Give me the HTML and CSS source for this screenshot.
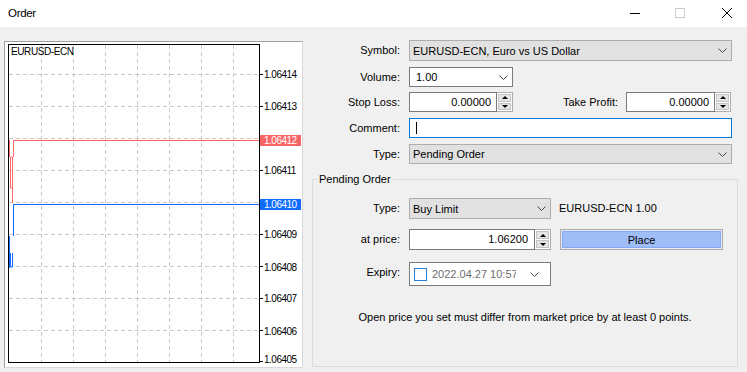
FILE: index.html
```html
<!DOCTYPE html>
<html lang="en">
<head>
  <meta charset="UTF-8">
  <title>Order</title>
  <link rel="stylesheet" href="styles.css">
</head>
<body>

  <div class="titlebar">
    <span class="title">Order</span>
    <div class="win-buttons">
      <span class="win-btn">
        <svg width="10" height="10" viewBox="0 0 10 10"><line x1="0" y1="5.5" x2="10" y2="5.5" stroke="#000" stroke-width="1"/></svg>
      </span>
      <span class="win-btn">
        <svg width="10" height="10" viewBox="0 0 10 10"><rect x="0.5" y="0.5" width="9" height="9" fill="none" stroke="#cccccc" stroke-width="1"/></svg>
      </span>
      <span class="win-btn close">
        <svg width="10" height="10" viewBox="0 0 10 10"><path d="M0 0 L10 10 M10 0 L0 10" stroke="#000" stroke-width="1"/></svg>
      </span>
    </div>
  </div>

  <div class="content">
    <!-- tick chart -->
    <div class="chart">
      <svg class="chart-svg" width="297" height="325" viewBox="5 42 297 325">
        <g stroke="#c8c8c8" stroke-width="1" stroke-dasharray="4 3" fill="none">
          <path d="M41.5 45 V362"/>
          <path d="M73.5 45 V362"/>
          <path d="M105.5 45 V362"/>
          <path d="M137.5 45 V362"/>
          <path d="M169.5 45 V362"/>
          <path d="M201.5 45 V362"/>
          <path d="M233.5 45 V362"/>
          <path d="M9 74.5 H259"/>
          <path d="M9 106.5 H259"/>
          <path d="M9 138.5 H259"/>
          <path d="M9 170.5 H259"/>
          <path d="M9 202.5 H259"/>
          <path d="M9 234.5 H259"/>
          <path d="M9 266.5 H259"/>
          <path d="M9 298.5 H259"/>
          <path d="M9 330.5 H259"/>
        </g>

        <rect x="8.5" y="44.5" width="251" height="318" fill="none" stroke="#000" stroke-width="1"/>

        <g stroke="#000" stroke-width="1">
          <path d="M260 74.5 H263"/>
          <path d="M260 106.5 H263"/>
          <path d="M260 170.5 H263"/>
          <path d="M260 234.5 H263"/>
          <path d="M260 266.5 H263"/>
          <path d="M260 298.5 H263"/>
          <path d="M260 330.5 H263"/>
          <path d="M260 361.5 H263"/>
        </g>

        <!-- ask line -->
        <path d="M13 140.5 H259" stroke="#ff5e5e" stroke-width="1" fill="none"/>
        <path d="M9.5 140 V157 M13.5 140 V157 M10.5 157 V188 H12.5 V157 Z M12.5 188 V203" stroke="#ff6b6b" stroke-width="1" fill="none"/>

        <!-- bid line -->
        <path d="M13 204.5 H259" stroke="#1469ff" stroke-width="1" fill="none"/>
        <path d="M13.5 204 V236 M9.5 236 V268 M10.5 253 V267 H12.5 V253" stroke="#1469ff" stroke-width="1" fill="none"/>

        <text class="chart-symbol" x="11" y="55">EURUSD-ECN</text>

        <g class="axis">
          <text x="264" y="78">1.06414</text>
          <text x="264" y="110">1.06413</text>
          <text x="264" y="174">1.06411</text>
          <text x="264" y="238">1.06409</text>
          <text x="264" y="271">1.06408</text>
          <text x="264" y="302">1.06407</text>
          <text x="264" y="335">1.06406</text>
          <text x="264" y="363">1.06405</text>
        </g>

        <rect x="260" y="135" width="41" height="11" fill="#fa6565"/>
        <text class="axis-tag" x="264" y="144">1.06412</text>
        <rect x="260" y="199" width="41" height="11" fill="#0f6cff"/>
        <text class="axis-tag" x="264" y="208">1.06410</text>
      </svg>
    </div>

    <div class="order-form">
      <div class="form-grid">
        <label>Symbol:</label>
        <div class="combo combo-gray">
          <span class="combo-text">EURUSD-ECN, Euro vs US Dollar</span>
          <svg class="chevron" width="9" height="5" viewBox="0 0 9 5"><polyline points="0.5,0.5 4.5,4.5 8.5,0.5" fill="none" stroke="#444" stroke-width="1"/></svg>
        </div>

        <label>Volume:</label>
        <div class="combo combo-white volume">
          <span class="combo-text">1.00</span>
          <svg class="chevron" width="9" height="5" viewBox="0 0 9 5"><polyline points="0.5,0.5 4.5,4.5 8.5,0.5" fill="none" stroke="#444" stroke-width="1"/></svg>
        </div>

        <label>Stop Loss:</label>
        <div class="stops-row">
          <div class="spin stop-spin">
            <span class="spin-input">0.00000</span>
            <span class="spin-btns"><span class="spin-btn"><i class="arrow-up"></i></span><span class="spin-btn"><i class="arrow-down"></i></span></span>
          </div>
          <label class="tp-label">Take Profit:</label>
          <div class="spin tp-spin">
            <span class="spin-input">0.00000</span>
            <span class="spin-btns"><span class="spin-btn"><i class="arrow-up"></i></span><span class="spin-btn"><i class="arrow-down"></i></span></span>
          </div>
        </div>

        <label>Comment:</label>
        <div class="text-input focused"><span class="caret"></span></div>

        <label>Type:</label>
        <div class="combo combo-gray">
          <span class="combo-text">Pending Order</span>
          <svg class="chevron" width="9" height="5" viewBox="0 0 9 5"><polyline points="0.5,0.5 4.5,4.5 8.5,0.5" fill="none" stroke="#444" stroke-width="1"/></svg>
        </div>
      </div>

      <fieldset class="pending">
        <legend>Pending Order</legend>
        <div class="pending-grid">
          <label>Type:</label>
          <div class="combo combo-gray">
            <span class="combo-text">Buy Limit</span>
            <svg class="chevron" width="9" height="5" viewBox="0 0 9 5"><polyline points="0.5,0.5 4.5,4.5 8.5,0.5" fill="none" stroke="#444" stroke-width="1"/></svg>
          </div>
          <span class="pending-info">EURUSD-ECN 1.00</span>

          <label>at price:</label>
          <div class="spin">
            <span class="spin-input">1.06200</span>
            <span class="spin-btns"><span class="spin-btn"><i class="arrow-up"></i></span><span class="spin-btn"><i class="arrow-down"></i></span></span>
          </div>
          <button class="place" type="button">Place</button>

          <label>Expiry:</label>
          <div class="date-picker">
            <span class="checkbox"></span>
            <span class="date-text">2022.04.27 10:57</span>
            <svg class="chevron date-chevron" width="9" height="5" viewBox="0 0 9 5"><polyline points="0.5,0.5 4.5,4.5 8.5,0.5" fill="none" stroke="#444" stroke-width="1"/></svg>
          </div>
          <span></span>
        </div>
        <p class="note">Open price you set must differ from market price by at least 0 points.</p>
      </fieldset>
    </div>
  </div>

</body>
</html>
```

FILE: styles.css
```css
* {
  margin: 0;
  padding: 0;
  box-sizing: border-box;
}

body {
  font-family: "Liberation Sans", Arial, sans-serif;
  font-size: 11px;
  color: #000;
  background: #f0f0f0;
  width: 747px;
  height: 372px;
  overflow: hidden;
}

/* title bar */
.titlebar {
  height: 27px;
  background: #fff;
  display: flex;
  align-items: center;
  padding-bottom: 2px;
}

.title {
  padding-left: 8px;
  font-size: 11.5px;
  letter-spacing: -0.3px;
}

.win-buttons {
  margin-left: auto;
  display: flex;
  align-self: stretch;
}

.win-btn {
  width: 45px;
  display: flex;
  align-items: center;
  justify-content: center;
}

.win-btn svg {
  display: block;
}

.win-btn.close {
  padding-left: 4px;
}

/* main area */
.content {
  display: flex;
  padding: 13px 0 0 4px;
}

.chart {
  width: 299px;
  height: 327px;
  margin-top: 1px;
  background: #fff;
  border: 1px solid;
  border-color: #a0a0a0 #d9d9d9 #d9d9d9 #a0a0a0;
}

.chart-svg {
  display: block;
  font-family: "Liberation Sans", Arial, sans-serif;
}

.chart-symbol {
  font-size: 10px;
  letter-spacing: -0.4px;
  fill: #000;
}

.axis text {
  font-size: 10px;
  letter-spacing: -0.5px;
  fill: #000;
}

.axis-tag {
  font-size: 10px;
  letter-spacing: -0.5px;
  fill: #fff;
}

/* order form */
.order-form {
  width: 426px;
  margin-left: 9px;
}

.form-grid {
  display: grid;
  grid-template-columns: 88px 1fr;
  grid-template-rows: 27px 25px 26px 26px 20px;
  column-gap: 9px;
  align-items: start;
  padding-right: 6px;
}

label {
  text-align: right;
  line-height: 20px;
  white-space: nowrap;
}

.combo {
  display: flex;
  align-items: center;
  height: 20px;
  border: 1px solid #adadad;
}

.combo-gray {
  background: #e1e1e1;
  height: 21px;
}

.form-grid .combo-gray:last-child {
  height: 20px;
}

.combo-white {
  background: #fff;
  border-color: #7a7a7a;
}

.combo-text {
  flex: 1;
  padding-left: 3px;
  white-space: nowrap;
}

.volume {
  width: 104px;
}

.volume .combo-text {
  padding-left: 6px;
}

.chevron {
  display: block;
  margin-right: 4px;
}

.stops-row {
  display: flex;
  align-items: center;
}

.tp-label {
  flex: 1;
  margin-right: 8px;
}

.spin {
  display: flex;
  height: 20px;
}

.stop-spin {
  width: 104px;
}

.tp-spin {
  width: 105px;
  margin-right: 1px;
}

.spin-input {
  flex: 1;
  background: #fff;
  border: 1px solid #7a7a7a;
  text-align: right;
  padding-right: 5px;
  line-height: 18px;
}

.spin-btns {
  width: 16px;
  display: flex;
  flex-direction: column;
  gap: 1px;
  padding: 1px;
  background: #fff;
  border: 1px solid #adadad;
  border-left: none;
}

.spin-btn {
  flex: 1;
  background: #e5e5e5;
  border: 1px solid #c4c4c4;
  display: flex;
  align-items: center;
  justify-content: center;
}

.arrow-up,
.arrow-down {
  width: 0;
  height: 0;
  border-left: 3px solid transparent;
  border-right: 3px solid transparent;
}

.arrow-up {
  border-bottom: 3px solid #000;
}

.arrow-down {
  border-top: 3px solid #000;
}

.text-input {
  height: 20px;
  background: #fff;
  border: 1px solid #7a7a7a;
  display: flex;
  align-items: center;
  padding-left: 6px;
}

.text-input.focused {
  border-color: #0078d7;
}

.caret {
  width: 1px;
  height: 12px;
  background: #000;
}

/* pending order group */
.pending {
  margin-top: 9px;
  height: 194px;
  border: 1px solid #dcdcdc;
  min-width: 0;
}

.pending legend {
  margin-left: 4px;
  padding: 0 2px;
  line-height: 13px;
}

.pending-grid {
  display: grid;
  grid-template-columns: 87px 142px 1fr;
  grid-template-rows: 31px 33px 24px;
  column-gap: 9px;
  align-items: start;
  padding-top: 12px;
}

.pending-info {
  line-height: 21px;
  margin-left: -1px;
}

.pending-grid .spin {
  height: 21px;
}

.pending-grid .spin-input {
  padding-right: 6px;
  line-height: 19px;
}

.place {
  width: 163px;
  height: 21px;
  font: inherit;
  color: #000;
  background: #9fbef8;
  border: 1px solid #adadad;
  box-shadow: inset 0 0 0 1px #e3e9f5, inset 0 0 0 2px #86aaf1;
}

.date-picker {
  height: 24px;
  background: #fff;
  border: 1px solid #7a7a7a;
  display: flex;
  align-items: center;
  padding-left: 4px;
}

.checkbox {
  width: 13px;
  height: 13px;
  border: 1px solid #2a7fd6;
  background: #fff;
  flex-shrink: 0;
}

.date-text {
  width: 84px;
  margin-left: 5px;
  color: #6d6d6d;
  white-space: nowrap;
  overflow: hidden;
}

.date-chevron {
  margin-left: 14px;
}

.note {
  text-align: center;
  margin-top: 25px;
  line-height: 13px;
}
```
